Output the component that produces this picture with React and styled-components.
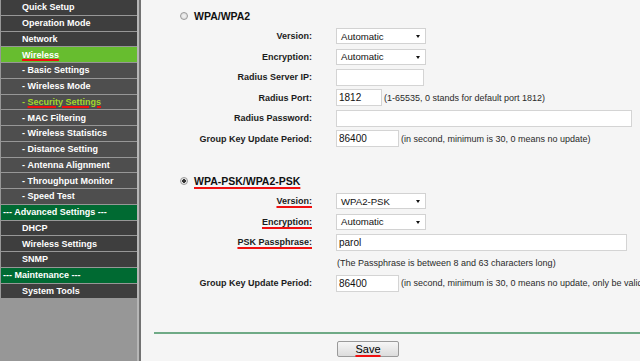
import React from "react";
import styled, { createGlobalStyle } from "styled-components";

const GlobalStyle = createGlobalStyle`
  html, body {
    margin: 0;
    padding: 0;
    overflow: hidden;
  }
  body {
    font-family: "Liberation Sans", Arial, sans-serif;
    background: #f5f5f5;
  }
`;

const Page = styled.div`
  display: flex;
  width: 640px;
  height: 361px;
  overflow: hidden;
`;

const Sidebar = styled.div`
  flex: 0 0 136px;
  padding-left: 1px;
  background: #979797;
  border-right: 2px solid #b6b6b6;
  display: flex;
  flex-direction: column;
`;

const itemBg = {
  main: "#3e3e3e",
  sub: "#4e4e4e",
  active: "#67bd2f",
  group: "#006a32",
};

const MenuItem = styled.div`
  height: 14.75px;
  margin-bottom: 1px;
  display: flex;
  align-items: center;
  padding-left: ${props => (props.kind === "group" ? "2px" : "21px")};
  background: ${props => itemBg[props.kind]};
  color: ${props => (props.current ? "#a4d82a" : "#ffffff")};
  font-size: 9px;
  font-weight: bold;
  white-space: nowrap;
`;

const Mark = styled.span`
  text-decoration: underline;
  text-decoration-color: #f01010;
  text-decoration-thickness: 2px;
  text-underline-offset: ${props => props.offset || "2px"};
`;

const Content = styled.div`
  flex: 1;
  min-width: 0;
  background: #f5f5f5;
  border-left: 2px solid #727272;
  padding-top: 6px;
  display: flex;
  flex-direction: column;
  overflow: hidden;
`;

const Section = styled.div`
  margin-top: ${props => props.gap || 0}px;
`;

const Heading = styled.div`
  height: 20px;
  display: flex;
  align-items: center;
  padding-left: 39px;
  gap: 6px;
  font-size: 10.5px;
  font-weight: bold;
  color: #111;
`;

const Radio = styled.span`
  width: 8px;
  height: 8px;
  border-radius: 50%;
  box-sizing: border-box;
  border: 1px solid #9a9a9a;
  background: ${props =>
    props.checked
      ? "radial-gradient(circle, #333 0 1.6px, #e4e4e4 2px)"
      : "radial-gradient(circle, #f4f4f4, #d6d6d6)"};
`;

const Row = styled.div`
  height: 20.5px;
  display: grid;
  grid-template-columns: 171px 1fr;
  column-gap: 24px;
  align-items: center;
`;

const Label = styled.div`
  text-align: right;
  font-size: 9px;
  font-weight: bold;
  color: #1c1c1c;
  white-space: nowrap;
`;

const Field = styled.div`
  display: flex;
  align-items: center;
  white-space: nowrap;
`;

const Select = styled.div`
  position: relative;
  width: 90px;
  height: 16px;
  box-sizing: border-box;
  border: 1px solid #d2d2d2;
  background: #fff;
  padding-left: 4px;
  display: flex;
  align-items: center;
  font-size: 9.6px;
  color: #111;

  &::after {
    content: "";
    position: absolute;
    right: 5px;
    top: 6px;
    border-left: 2.5px solid transparent;
    border-right: 2.5px solid transparent;
    border-top: 3px solid #111;
  }
`;

const TextInput = styled.input`
  width: ${props => props.w}px;
  height: 17px;
  box-sizing: border-box;
  border: 1px solid #d4d4d4;
  background: #fff;
  padding: 0 2px;
  margin: 0;
  font-family: "Liberation Sans", Arial, sans-serif;
  font-size: 10px;
  color: #111;
  outline: none;
`;

const Hint = styled.span`
  margin-left: ${props => props.ml || 2}px;
  font-size: 9px;
  color: #2a2a2a;
`;

const Footer = styled.div`
  margin-top: 38px;
  margin-left: 13px;
  border-top: 2px solid #6faa86;
  padding-top: 5px;
  padding-left: 183px;
`;

const SaveButton = styled.button`
  width: 62px;
  height: 16px;
  padding: 0;
  box-sizing: border-box;
  border: 1px solid #9a9a9a;
  border-radius: 2px;
  background: linear-gradient(#f6f6f6, #dcdcdc);
  font-family: "Liberation Sans", Arial, sans-serif;
  font-size: 11px;
  color: #000;
  line-height: 14px;
`;

const menu = [
  { t: "Quick Setup", kind: "main" },
  { t: "Operation Mode", kind: "main" },
  { t: "Network", kind: "main" },
  { t: "Wireless", kind: "active", mark: true },
  { t: "Basic Settings", kind: "sub" },
  { t: "Wireless Mode", kind: "sub" },
  { t: "Security Settings", kind: "sub", current: true, mark: true },
  { t: "MAC Filtering", kind: "sub" },
  { t: "Wireless Statistics", kind: "sub" },
  { t: "Distance Setting", kind: "sub" },
  { t: "Antenna Alignment", kind: "sub" },
  { t: "Throughput Monitor", kind: "sub" },
  { t: "Speed Test", kind: "sub" },
  { t: "--- Advanced Settings ---", kind: "group" },
  { t: "DHCP", kind: "main" },
  { t: "Wireless Settings", kind: "main" },
  { t: "SNMP", kind: "main" },
  { t: "--- Maintenance ---", kind: "group" },
  { t: "System Tools", kind: "main" },
];

const MenuText = ({ item }) => {
  const text = item.mark ? <Mark offset="1px">{item.t}</Mark> : item.t;
  if (item.kind === "sub") {
    return (
      <>
        -&nbsp;{text}
      </>
    );
  }
  return text;
};

const FormRow = ({ label, mark, children }) => (
  <Row>
    <Label>{mark ? <Mark>{label}</Mark> : label}</Label>
    <Field>{children}</Field>
  </Row>
);

export default function App() {
  return (
    <Page>
      <GlobalStyle />
      <Sidebar>
        {menu.map((item, i) => (
          <MenuItem key={i} kind={item.kind} current={item.current}>
            <MenuText item={item} />
          </MenuItem>
        ))}
      </Sidebar>

      <Content>
        <Section>
          <Heading>
            <Radio />
            WPA/WPA2
          </Heading>
          <FormRow label="Version:">
            <Select>Automatic</Select>
          </FormRow>
          <FormRow label="Encryption:">
            <Select>Automatic</Select>
          </FormRow>
          <FormRow label="Radius Server IP:">
            <TextInput w={88} defaultValue="" />
          </FormRow>
          <FormRow label="Radius Port:">
            <TextInput w={46} defaultValue="1812" />
            <Hint>(1-65535, 0 stands for default port 1812)</Hint>
          </FormRow>
          <FormRow label="Radius Password:">
            <TextInput w={296} defaultValue="" />
          </FormRow>
          <FormRow label="Group Key Update Period:">
            <TextInput w={63} defaultValue="86400" />
            <Hint>(in second, minimum is 30, 0 means no update)</Hint>
          </FormRow>
        </Section>

        <Section gap={22}>
          <Heading>
            <Radio checked />
            <Mark>WPA-PSK/WPA2-PSK</Mark>
          </Heading>
          <FormRow label="Version:" mark>
            <Select>WPA2-PSK</Select>
          </FormRow>
          <FormRow label="Encryption:" mark>
            <Select>Automatic</Select>
          </FormRow>
          <FormRow label="PSK Passphrase:" mark>
            <TextInput w={291} defaultValue="parol" />
          </FormRow>
          <FormRow label="">
            <Hint ml={1}>(The Passphrase is between 8 and 63 characters long)</Hint>
          </FormRow>
          <FormRow label="Group Key Update Period:">
            <TextInput w={63} defaultValue="86400" />
            <Hint>
              (in second, minimum is 30, 0 means no update, only be valid in
              AP mode)
            </Hint>
          </FormRow>
        </Section>

        <Footer>
          <SaveButton>
            <Mark offset="2px">Save</Mark>
          </SaveButton>
        </Footer>
      </Content>
    </Page>
  );
}
